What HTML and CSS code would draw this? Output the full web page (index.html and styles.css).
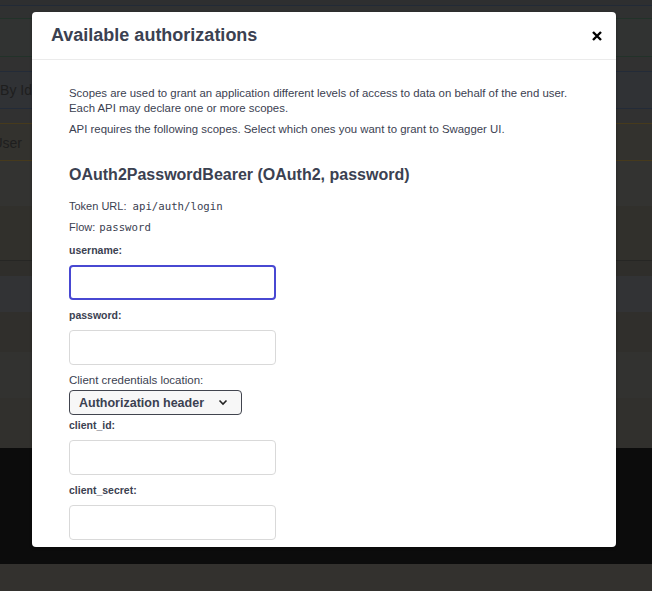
FILE: index.html
```html
<!DOCTYPE html>
<html>
<head>
<meta charset="utf-8">
<link rel="stylesheet" href="styles.css">
</head>
<body>
<div class="page">
  <div class="band b0"></div>
  <div class="band b1"></div>
  <div class="band op op-green"></div>
  <div class="gap"></div>
  <div class="band op op-blue"><span class="bgtext">Get User By Id</span></div>
  <div class="gap"></div>
  <div class="band op op-orange"><span class="bgtext t2">Update User</span></div>
  <div class="band r1"></div>
  <div class="band r2"></div>
  <div class="band r3"></div>
  <div class="band r4"></div>
  <div class="band r5"></div>
  <div class="band r6"></div>
  <div class="band r7"></div>
  <div class="band footer"></div>
  <div class="band bottom"></div>
</div>

<div class="modal">
  <div class="modal-header">
    <h3 class="modal-title">Available authorizations</h3>
    <button class="close" aria-label="close">
      <svg width="10" height="10" viewBox="0 0 10 10"><path d="M1 1 L9 9 M9 1 L1 9" stroke="#000" stroke-width="2.4" stroke-linecap="butt"/></svg>
    </button>
  </div>
  <div class="modal-body">
    <p class="scopes">Scopes are used to grant an application different levels of access to data on behalf of the end user.<br>Each API may declare one or more scopes.</p>
    <p class="scopes">API requires the following scopes. Select which ones you want to grant to Swagger UI.</p>
    <h4 class="scheme">OAuth2PasswordBearer (OAuth2, password)</h4>
    <p class="meta">Token URL: <code>api/auth/login</code></p>
    <p class="meta">Flow: <code class="flow">password</code></p>
    <label class="lbl">username:</label>
    <input class="field focus" type="text">
    <label class="lbl">password:</label>
    <input class="field" type="text">
    <label class="lbl plain">Client credentials location:</label>
    <div class="select"><span>Authorization header</span>
      <svg width="10" height="7" viewBox="0 0 10 7"><path d="M1.5 1.5 L5 5 L8.5 1.5" fill="none" stroke="#222" stroke-width="1.6"/></svg>
    </div>
    <label class="lbl">client_id:</label>
    <input class="field" type="text">
    <label class="lbl">client_secret:</label>
    <input class="field" type="text">
  </div>
</div>
</body>
</html>
```

FILE: styles.css
```css
* { box-sizing: border-box; }
html, body { margin: 0; padding: 0; }
body {
  width: 652px;
  height: 591px;
  overflow: hidden;
  background: #323231;
  font-family: "Liberation Sans", Arial, sans-serif;
}
.page { display: flex; flex-direction: column; }
.band { width: 100%; position: relative; }
.b0 { height: 6px; background: #2e2f30; border-bottom: 1px solid #222a36; }
.b1 { height: 13px; background: #303131; border-bottom: 1px solid #223229; }
.op { height: 38px; }
.op-green { background: #313332; border-bottom: 1px solid #223229; }
.gap { height: 14px; background: #313131; }
.op-blue { background: #303235; border-top: 1px solid #232b38; border-bottom: 1px solid #232b38; }
.op-orange { background: #33322e; border-top: 1px solid #463a1c; border-bottom: 1px solid #463a1c; }
.bgtext {
  position: absolute; right: 620px; top: 10px;
  font-size: 14px; color: #1e1e1e; white-space: nowrap;
}
.t2 { right: 630px; top: 11px; }
.r1 { height: 45px; background: #333331; }
.r2 { height: 55px; background: #31302c; border-bottom: 1px solid #262624; }
.r3 { height: 15px; background: #2f2e2b; }
.r4 { height: 36px; background: #323335; }
.r5 { height: 40px; background: #302f2c; }
.r6 { height: 46px; background: #323230; }
.r7 { height: 50px; background: #31302d; }
.footer { height: 116px; background: #0c0c0c; }
.bottom { height: 40px; background: #33312e; }

.modal {
  position: absolute;
  left: 32px; top: 12px;
  width: 584px; height: 535px;
  background: #fff;
  border-radius: 4px;
  overflow: hidden;
  box-shadow: 0 1px 3px rgba(0,0,0,.35);
  color: #3b4151;
}
.modal-header {
  height: 48px;
  display: flex; align-items: center; justify-content: space-between;
  padding: 0 14px 0 19px;
  border-bottom: 1px solid #ebebeb;
}
.modal-title { margin: 0; font-size: 18px; font-weight: 700; color: #3b4151; }
.close { border: 0; background: none; padding: 0; width: 10px; height: 10px; display: flex; margin-top: 1px; }
.modal-body { padding: 26px 37px 0 37px; display: flex; flex-direction: column; align-items: flex-start; }
.scopes { margin: 0 0 6px; font-size: 11.4px; line-height: 15px; }
.scheme { margin: 22px 0 15px; font-size: 16px; line-height: 19px; font-weight: 700; }
.meta { margin: 0 0 6px; font-size: 11px; line-height: 14px; }
.meta + .meta { margin-bottom: 0; }
code { font-family: "DejaVu Sans Mono", "Liberation Mono", monospace; font-size: 10.7px; padding-left: 3px; }
code.flow { padding-left: 1px; }
.lbl { font-size: 10.5px; line-height: 13px; font-weight: 700; margin: 9px 0 8px; }
.lbl.plain { font-weight: 400; font-size: 11.5px; margin-bottom: 3px; }
.field {
  width: 207px; height: 35px;
  border: 1px solid #d9d9d9; border-radius: 4px;
  margin: 0; background: #fff; outline: none;
}
.field.focus { border: 2px solid #4848d2; }
.select {
  width: 173px; height: 25px;
  border: 1.5px solid #41444e; border-radius: 4px;
  background: #f7f7f7;
  display: flex; align-items: center; justify-content: space-between;
  padding: 0 13px 0 9px;
  font-size: 12.5px; font-weight: 700; color: #3b4151;
}
.select + .lbl { margin-top: 4px; }
```
